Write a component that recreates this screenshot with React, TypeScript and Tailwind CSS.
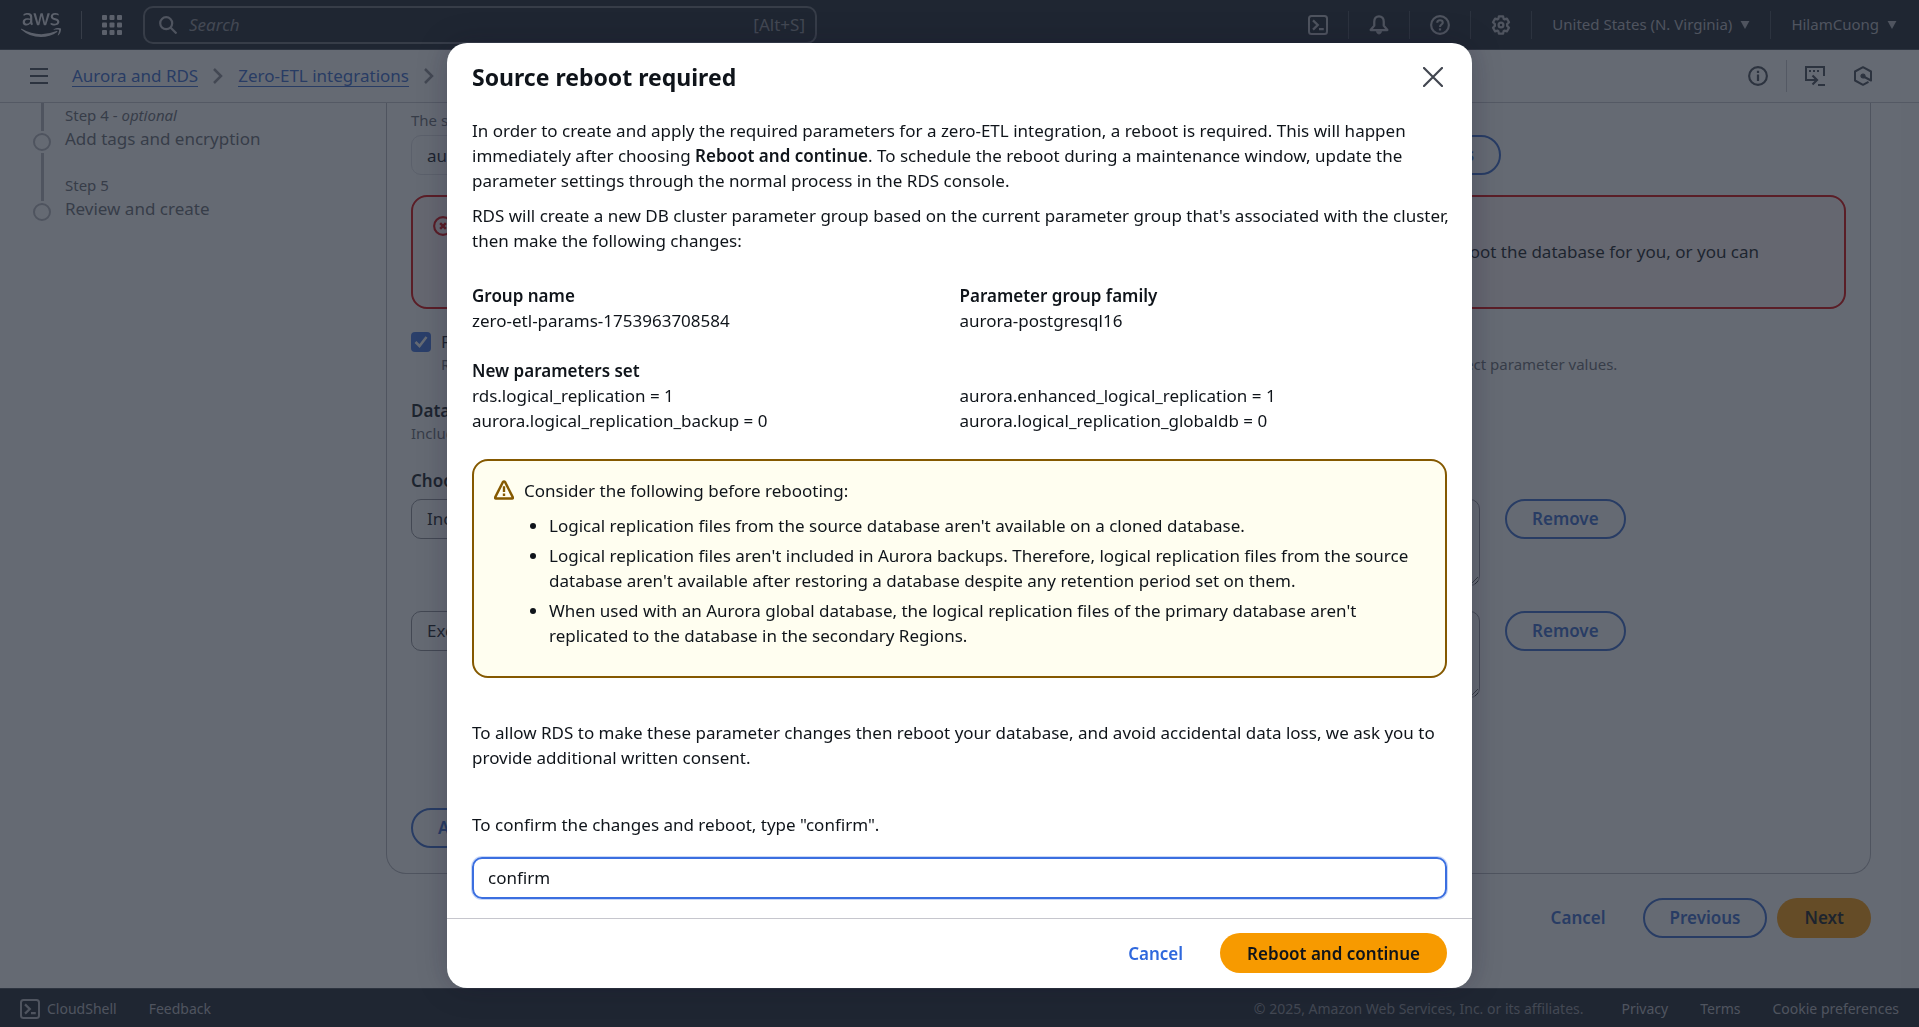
import { useState } from "react";
import type { ReactNode } from "react";
import { FaAws } from "react-icons/fa";

type IconProps = { className?: string };

function TerminalIcon({ className = "size-5" }: IconProps) {
  return (
    <svg viewBox="0 0 16 16" className={className} fill="none" stroke="currentColor" strokeWidth="1.6" aria-hidden="true">
      <rect x="0.8" y="0.8" width="14.4" height="14.4" rx="2" />
      <path d="M4 4.3 7.8 8 4 11.7M8.8 11.2h3.8" strokeWidth="1.8" />
    </svg>
  );
}

function BellIcon() {
  return (
    <svg viewBox="0 0 16 16" className="size-5" fill="none" stroke="currentColor" strokeWidth="1.8" strokeLinejoin="round" aria-hidden="true">
      <path d="M8 1C5.600 1 4.200 2.900 4.200 5.300v3.200L1.300 12h13.400l-2.900-3.500V5.300C11.800 2.900 10.400 1 8 1Z" />
      <path d="M5.900 13c.3 1.500 1 2.200 2.100 2.200s1.800-.7 2.100-2.200Z" fill="currentColor" strokeWidth="0.600" />
    </svg>
  );
}

function HelpIcon() {
  return (
    <svg viewBox="0 0 16 16" className="size-5" fill="none" stroke="currentColor" strokeWidth="1.7" aria-hidden="true">
      <circle cx="8" cy="8" r="7.100" />
      <path d="M5.800 6.200C5.800 4.900 6.800 4.200 8 4.200s2.200.7 2.200 1.900c0 1.500-2.200 1.600-2.200 3.500" />
      <path d="M8 10.700v1.700" strokeWidth="1.800" />
    </svg>
  );
}

function GearIcon() {
  return (
    <svg viewBox="0 0 16 16" className="size-5" fill="none" stroke="currentColor" strokeWidth="1.8" strokeLinejoin="round" aria-hidden="true">
      <circle cx="8" cy="8" r="1.900" />
      <path d="M6.300 1.100h3.400l.4 2 .6.400 2-.6 1.700 2.900-1.500 1.500v1.400l1.500 1.500-1.700 2.900-2-.6-.6.400-.4 2H6.300l-.4-2-.6-.4-2 .6-1.700-2.900 1.500-1.500V7.300L1.600 5.800l1.700-2.900 2 .6.600-.4Z" />
    </svg>
  );
}

function InfoIcon() {
  return (
    <svg viewBox="0 0 16 16" className="size-5" fill="none" stroke="currentColor" strokeWidth="1.7" aria-hidden="true">
      <circle cx="8" cy="8" r="7.100" />
      <path d="M8 3.800v1.800M8 6.800v5.200" strokeWidth="1.800" />
    </svg>
  );
}

function ConsoleArrowIcon() {
  return (
    <svg viewBox="0 0 20 20" className="size-5" fill="none" stroke="currentColor" strokeWidth="2" aria-hidden="true">
      <path d="M4.500 14H1V1h18v9" />
      <path d="M4 5h2M8 5h2M12 5h2" strokeWidth="2" />
      <path d="M4 14h7M7.500 9.500 12 14l-4.500 4.500" strokeWidth="2.200" />
      <path d="M13 19h7" />
    </svg>
  );
}

function HexIcon() {
  return (
    <svg viewBox="0 0 20 20" className="size-5" fill="none" stroke="currentColor" strokeWidth="2" strokeLinejoin="round" aria-hidden="true">
      <path d="M18 11.500V5.500L10 1.200 2 5.500v9l8 4.300 5.500-3" />
      <circle cx="10" cy="10" r="2" fill="currentColor" strokeWidth="1.200" />
      <path d="M10.500 10.500 18 14.500v-4" />
    </svg>
  );
}

function Caret() {
  return (
    <svg viewBox="0 0 10 9" className="h-2 w-2.5" fill="currentColor" aria-hidden="true">
      <path d="M0 0h10L5 9Z" />
    </svg>
  );
}

function Chevron() {
  return (
    <svg viewBox="0 0 10 16" className="h-4 w-2.5 text-[#8c8c94]" fill="none" stroke="currentColor" strokeWidth="2.500" aria-hidden="true">
      <path d="m1 1 7 7-7 7" />
    </svg>
  );
}

function Rule() {
  return <span className="h-7 w-px bg-[#424650]" />;
}

function TopBar() {
  return (
    <header className="flex h-[50px] shrink-0 items-center border-b border-[#424650] bg-[#161d26] pr-[22px] pl-[21px] text-[#b4b4bb]">
      <a href="#home" aria-label="AWS home" className="text-[#dedee3]">
        <FaAws className="h-8 w-10" />
      </a>
      <span className="ml-5 h-7 w-px bg-[#656871]" />
      <button type="button" aria-label="Services" className="ml-5 text-[#dedee3]">
        <svg viewBox="0 0 20 20" className="size-5" fill="currentColor" aria-hidden="true">
          {[0, 7.5, 15].map((y) => [0, 7.5, 15].map((x) => <rect key={`${x}-${y}`} x={x} y={y} width="5" height="5" rx="1" />))}
        </svg>
      </button>
      <label className="ml-[21px] flex h-[38px] w-[674px] items-center rounded-[10px] border-2 border-[#656871] px-3.5">
        <svg viewBox="0 0 18 18" className="size-[18px] shrink-0" fill="none" stroke="currentColor" strokeWidth="2.200" aria-hidden="true">
          <circle cx="7.200" cy="7.200" r="6" />
          <path d="m11.500 11.500 6 6" />
        </svg>
        <input aria-label="Search" placeholder="Search" className="ml-3 min-w-0 flex-1 bg-transparent text-[17px] italic outline-none placeholder:text-[#8c8c94]" />
        <span className="-mr-1 text-[17px] text-[#8c8c94]">[Alt+S]</span>
      </label>
      <div className="ml-auto flex items-center gap-5 text-[15px]">
        <button type="button" aria-label="CloudShell"><TerminalIcon /></button>
        <Rule />
        <button type="button" aria-label="Notifications"><BellIcon /></button>
        <Rule />
        <button type="button" aria-label="Help"><HelpIcon /></button>
        <Rule />
        <button type="button" aria-label="Settings"><GearIcon /></button>
        <Rule />
        <button type="button" className="flex items-center gap-2">United States (N. Virginia)<Caret /></button>
        <Rule />
        <button type="button" className="flex items-center gap-2">HilamCuong<Caret /></button>
      </div>
    </header>
  );
}

function Breadcrumbs() {
  return (
    <div className="flex h-[53px] shrink-0 items-center border-b border-[#c6c6cd] bg-white pr-[46px] pl-[30px] text-[#424650]">
      <button type="button" aria-label="Open navigation">
        <svg viewBox="0 0 18 16" className="h-4 w-[18px]" stroke="currentColor" strokeWidth="2" aria-hidden="true">
          <path d="M0 1h18M0 8h18M0 15h18" />
        </svg>
      </button>
      <nav aria-label="Breadcrumbs" className="ml-6 flex items-center gap-[15px] text-[17px] leading-[21px] text-[#3366cc]">
        <a href="#rds" className="border-b border-current">Aurora and RDS</a>
        <Chevron />
        <a href="#etl" className="border-b border-current">Zero-ETL integrations</a>
        <Chevron />
        <span className="text-[#656871]">Create zero-ETL integration</span>
      </nav>
      <div className="ml-auto flex items-center">
        <button type="button" aria-label="Info"><InfoIcon /></button>
        <span className="mx-[18px] h-8 w-px bg-[#c6c6cd]" />
        <button type="button" aria-label="Console to code"><ConsoleArrowIcon /></button>
        <button type="button" aria-label="Recommendations" className="ml-7"><HexIcon /></button>
      </div>
    </div>
  );
}

function Step({ label, title, optional, last }: { label: string; title: string; optional?: boolean; last?: boolean }) {
  return (
    <li className="flex gap-3.5">
      <div className="flex flex-col items-center">
        <span className="h-7 w-[3px] bg-[#b4b4bb]" />
        <span className="my-0.5 size-[18px] rounded-full border-2 border-[#b4b4bb]" />
        <span className={last ? "h-5 w-[3px]" : "h-5 w-[3px] bg-[#b4b4bb]"} />
      </div>
      <div className="pt-0.5 text-[#656871]">
        <p className="text-[15px] leading-5">{label}{optional && <> - <em>optional</em></>}</p>
        <p className="text-[17px] leading-7">{title}</p>
      </div>
    </li>
  );
}

function OutlineButton({ children }: { children: ReactNode }) {
  return (
    <button type="button" className="h-10 shrink-0 rounded-full border-2 border-[#3366cc] px-[25px] text-[17px] font-semibold text-[#3366cc]">
      {children}
    </button>
  );
}

function FilterRow({ kind, value }: { kind: string; value: string }) {
  return (
    <div className="flex items-start gap-[25px]">
      <select aria-label={`${kind} filter type`} className="h-10 w-[360px] appearance-none rounded-[10px] border border-[#8c8c94] px-[15px] text-[17px]">
        <option>{kind}</option>
      </select>
      <textarea aria-label={`${kind} filter expression`} defaultValue={value} className="h-[87px] w-[684px] rounded-[10px] border border-[#8c8c94] px-[15px] py-2 text-[17px]" />
      <OutlineButton>Remove</OutlineButton>
    </div>
  );
}

function Wizard() {
  return (
    <div className="flex min-h-0 flex-1 bg-white">
      <ol className="w-[386px] shrink-0 pl-[33px]">
        <Step label="Step 4" title="Add tags and encryption" optional />
        <Step label="Step 5" title="Review and create" last />
      </ol>
      <div className="min-w-0 flex-1">
        <section className="flex flex-col rounded-b-[20px] border border-t-0 border-[#b4b4bb] px-6 pt-[7px] pb-[25px] text-[#0f141a]">
          <p className="text-[15px] leading-5 text-[#656871]">The source database for the integration.</p>
          <div className="mt-[5px] flex gap-[25px]">
            <input aria-label="Source database" readOnly value="aurora-postgresql-cluster" className="h-10 w-[824px] rounded-[10px] border border-[#dedee3] px-[15px] text-[17px]" />
            <OutlineButton>Browse RDS databases</OutlineButton>
          </div>
          <div className="mt-5 flex gap-2.5 rounded-[16px] border-2 border-[#db0000] bg-[#fff5f5] px-5 pt-[17px] pb-[18px] text-[17px] leading-[25px]">
            <svg viewBox="0 0 16 16" className="mt-0.5 size-5 shrink-0 text-[#db0000]" fill="none" stroke="currentColor" strokeWidth="1.7" aria-hidden="true">
              <circle cx="8" cy="8" r="7.100" />
              <path d="m5.700 5.700 4.600 4.600m0-4.600-4.600 4.600" strokeWidth="2" />
            </svg>
            <div className="whitespace-nowrap">
              <p className="font-semibold">Fix parameter values</p>
              <p>The current values of the cluster parameters aren't compatible with zero-ETL integrations. RDS can fix the parameters, and reboot the database for you, or you can</p>
              <p>manually change them.</p>
            </div>
          </div>
          <label className="mt-5 flex gap-2.5 whitespace-nowrap">
            <span className="mt-[3px] grid size-5 shrink-0">
              <input type="checkbox" defaultChecked className="col-start-1 row-start-1 size-5 appearance-none rounded-[4px] bg-[#3b6fe0]" />
              <svg viewBox="0 0 20 20" className="pointer-events-none col-start-1 row-start-1 size-5 text-white" fill="none" stroke="currentColor" strokeWidth="2.500" aria-hidden="true">
                <path d="m4.500 10 4 4 7-9" />
              </svg>
            </span>
            <span className="flex flex-col">
              <span className="text-[17px] leading-[25px]">Fix it for me (requires reboot)</span>
              <span className="text-[15px] leading-5 text-[#656871]">RDS will create a new DB parameter group based on the current parameter group that's associated with it, then reboot the database with the correct parameter values.</span>
            </span>
          </label>
          <h3 className="mt-6 text-[17px] leading-[25px] font-semibold">Data filtering options</h3>
          <p className="text-[15px] leading-5 text-[#656871]">Include or exclude databases, schemas and tables.</p>
          <h3 className="mt-[25px] mb-1.5 text-[17px] leading-[25px] font-semibold">Choose filter type</h3>
          <div className="flex flex-col gap-[25px]">
            <FilterRow kind="Include" value="postgres.*.*" />
            <FilterRow kind="Exclude" value="postgres.audit.*" />
          </div>
          <div className="mt-[110px]">
            <OutlineButton>Add filter</OutlineButton>
          </div>
        </section>
        <div className="mt-6 flex items-center justify-end gap-2.5 text-[17px] font-semibold">
          <button type="button" className="h-10 px-[27px] text-[#3366cc]">Cancel</button>
          <OutlineButton>Previous</OutlineButton>
          <button type="button" className="h-10 rounded-full bg-[#ff9900] px-[27px] text-[#0f141a]">Next</button>
        </div>
      </div>
      <div className="ml-[30px] w-[18px] shrink-0 bg-[#fafafa]" />
    </div>
  );
}

function Footer() {
  return (
    <footer className="flex h-[39px] shrink-0 items-center gap-8 border-t border-[#424650] bg-[#161d26] px-5 pt-0.5 text-sm text-[#b4b4bb]">
      <button type="button" className="flex items-center gap-[7px]"><TerminalIcon />CloudShell</button>
      <a href="#feedback">Feedback</a>
      <span className="mr-1.5 ml-auto text-[#8c8c94]">© 2025, Amazon Web Services, Inc. or its affiliates.</span>
      <a href="#privacy">Privacy</a>
      <a href="#terms">Terms</a>
      <a href="#cookies">Cookie preferences</a>
    </footer>
  );
}

function RebootDialog() {
  const [consent, setConsent] = useState("confirm");
  return (
    <div className="fixed inset-0 flex items-start justify-center overflow-hidden bg-[#232b37]/70 pt-[43px]">
      <div role="dialog" aria-modal="true" aria-labelledby="dialog-title" className="w-[1025px] rounded-[20px] bg-white text-[17px] leading-[25px] text-[#0f141a] shadow-[0_0_30px_rgba(15,10,40,0.25)]">
        <div className="flex items-center justify-between px-[25px] pt-[19px]">
          <h2 id="dialog-title" className="text-[23px] leading-[30px] font-bold">Source reboot required</h2>
          <button type="button" aria-label="Close" className="mr-1 text-[#424650]">
            <svg viewBox="0 0 20 20" className="size-5" fill="none" stroke="currentColor" strokeWidth="2.200" strokeLinecap="round" aria-hidden="true">
              <path d="m1 1 18 18M19 1 1 19" />
            </svg>
          </button>
        </div>
        <div className="px-[25px] pt-[26px] pb-[19px]">
          <div className="-mr-4">
            <p className="pr-4">
              In order to create and apply the required parameters for a zero-ETL integration, a reboot is required. This will happen immediately after choosing <b className="font-semibold">Reboot and continue</b>. To schedule the reboot during a maintenance window, update the parameter settings through the normal process in the RDS console.
            </p>
            <p className="mt-2.5">
              RDS will create a new DB cluster parameter group based on the current parameter group that's associated with the cluster, then make the following changes:
            </p>
          </div>
          <div className="mt-[30px] grid grid-cols-2">
            <div><p className="font-semibold">Group name</p><p>zero-etl-params-1753963708584</p></div>
            <div><p className="font-semibold">Parameter group family</p><p>aurora-postgresql16</p></div>
          </div>
          <p className="mt-[25px] font-semibold">New parameters set</p>
          <div className="grid grid-cols-2">
            <p>rds.logical_replication = 1</p>
            <p>aurora.enhanced_logical_replication = 1</p>
            <p>aurora.logical_replication_backup = 0</p>
            <p>aurora.logical_replication_globaldb = 0</p>
          </div>
          <div className="mt-[26px] flex gap-2.5 rounded-[16px] border-2 border-[#855900] bg-[#fffef0] px-5 pt-[17px] pb-[28px]">
            <svg viewBox="0 0 16 16" className="mt-0.5 size-5 shrink-0 text-[#855900]" fill="none" stroke="currentColor" strokeWidth="1.900" strokeLinejoin="round" aria-hidden="true">
              <path d="M7.200 1.500.9 13.900c-.2.500 0 .9.500.9h13.200c.5 0 .7-.4.500-.9L8.800 1.500c-.4-.6-1.200-.6-1.600 0Z" />
              <path d="M8 5v4.500M8 10.800v1.900" strokeWidth="1.900" />
            </svg>
            <div>
              <p>Consider the following before rebooting:</p>
              <ul className="mt-2.5 flex list-disc flex-col gap-[5px] pl-[25px]">
                <li>Logical replication files from the source database aren't available on a cloned database.</li>
                <li>Logical replication files aren't included in Aurora backups. Therefore, logical replication files from the source database aren't available after restoring a database despite any retention period set on them.</li>
                <li>When used with an Aurora global database, the logical replication files of the primary database aren't replicated to the database in the secondary Regions.</li>
              </ul>
            </div>
          </div>
          <p className="mt-[42px]">
            To allow RDS to make these parameter changes then reboot your database, and avoid accidental data loss, we ask you to provide additional written consent.
          </p>
          <label htmlFor="consent" className="mt-[42px] block">To confirm the changes and reboot, type "confirm".</label>
          <input
            id="consent"
            value={consent}
            onChange={(event) => setConsent(event.target.value)}
            className="mt-5 h-[42px] w-full rounded-[10px] border-2 border-[#3b6fe0] px-3.5 pb-0.5 ring-1 ring-[#c9d8f8] outline-none"
          />
        </div>
        <div className="flex items-center justify-end gap-2.5 border-t border-[#c6c6cd] px-[25px] pt-3.5 pb-[15px] font-semibold">
          <button type="button" className="h-10 px-[27px] text-[#2f68dd]">Cancel</button>
          <button type="button" className="h-10 rounded-full bg-[#f79a00] px-[27px]">Reboot and continue</button>
        </div>
      </div>
    </div>
  );
}

export default function App() {
  return (
    <div className="flex h-screen flex-col overflow-hidden font-['Noto_Sans',sans-serif]">
      <TopBar />
      <Breadcrumbs />
      <Wizard />
      <Footer />
      <RebootDialog />
    </div>
  );
}
